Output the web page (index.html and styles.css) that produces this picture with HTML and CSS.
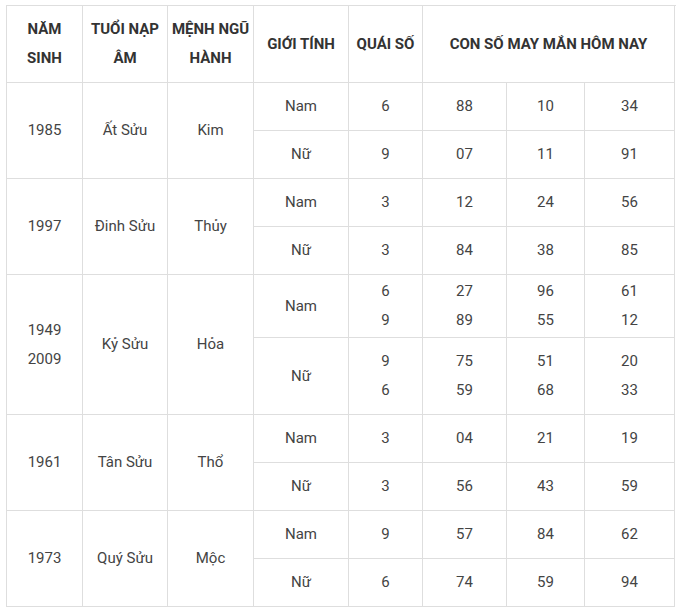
FILE: index.html
```html
<!DOCTYPE html>
<html lang="vi">
<head>
<meta charset="utf-8">
<link rel="stylesheet" href="styles.css">
</head>
<body>
<div class="wrap">
<table class="tbl">
  <colgroup>
    <col class="c1"><col class="c2"><col class="c3"><col class="c4"><col class="c5"><col class="c6"><col class="c7"><col class="c8">
  </colgroup>
  <thead>
    <tr class="h">
      <th>NĂM<br>SINH</th>
      <th>TUỔI NẠP<br>ÂM</th>
      <th>MỆNH NGŨ<br>HÀNH</th>
      <th>GIỚI TÍNH</th>
      <th>QUÁI SỐ</th>
      <th colspan="4">CON SỐ MAY MẮN HÔM NAY</th>
    </tr>
  </thead>
  <tbody>
    <tr class="r"><td rowspan="2">1985</td><td rowspan="2">Ất Sửu</td><td rowspan="2">Kim</td><td>Nam</td><td>6</td><td>88</td><td>10</td><td>34</td></tr>
    <tr class="r"><td>Nữ</td><td>9</td><td>07</td><td>11</td><td>91</td></tr>
    <tr class="r"><td rowspan="2">1997</td><td rowspan="2">Đinh Sửu</td><td rowspan="2">Thủy</td><td>Nam</td><td>3</td><td>12</td><td>24</td><td>56</td></tr>
    <tr class="r"><td>Nữ</td><td>3</td><td>84</td><td>38</td><td>85</td></tr>
    <tr class="r2a"><td rowspan="2">1949<br>2009</td><td rowspan="2">Kỷ Sửu</td><td rowspan="2">Hỏa</td><td>Nam</td><td>6<br>9</td><td>27<br>89</td><td>96<br>55</td><td>61<br>12</td></tr>
    <tr class="r2b"><td>Nữ</td><td>9<br>6</td><td>75<br>59</td><td>51<br>68</td><td>20<br>33</td></tr>
    <tr class="r"><td rowspan="2">1961</td><td rowspan="2">Tân Sửu</td><td rowspan="2">Thổ</td><td>Nam</td><td>3</td><td>04</td><td>21</td><td>19</td></tr>
    <tr class="r"><td>Nữ</td><td>3</td><td>56</td><td>43</td><td>59</td></tr>
    <tr class="r"><td rowspan="2">1973</td><td rowspan="2">Quý Sửu</td><td rowspan="2">Mộc</td><td>Nam</td><td>9</td><td>57</td><td>84</td><td>62</td></tr>
    <tr class="r"><td>Nữ</td><td>6</td><td>74</td><td>59</td><td>94</td></tr>
  </tbody>
</table>
</div>
</body>
</html>
```
FILE: styles.css
```css
html, body {
  margin: 0;
  padding: 0;
  background: #fff;
}
.wrap {
  padding: 5px 0 0 6px;
}
.tbl {
  border-collapse: collapse;
  table-layout: fixed;
  width: 669px;
  font-family: Roboto, "Noto Sans", sans-serif;
  font-size: 15px;
  line-height: 29px;
  color: #444;
}
.c1 { width: 76px; }
.c2 { width: 85px; }
.c3 { width: 86px; }
.c4 { width: 95px; }
.c5 { width: 74px; }
.c6 { width: 84px; }
.c7 { width: 78px; }
.c8 { width: 90px; }
.tbl th, .tbl td {
  border: 1px solid #dedede;
  padding: 0;
  text-align: center;
  vertical-align: middle;
}
.tbl th {
  font-weight: 700;
  color: #333;
}
.h { height: 77px; }
.r { height: 48px; }
.r2a { height: 63px; }
.r2b { height: 77px; }
```
